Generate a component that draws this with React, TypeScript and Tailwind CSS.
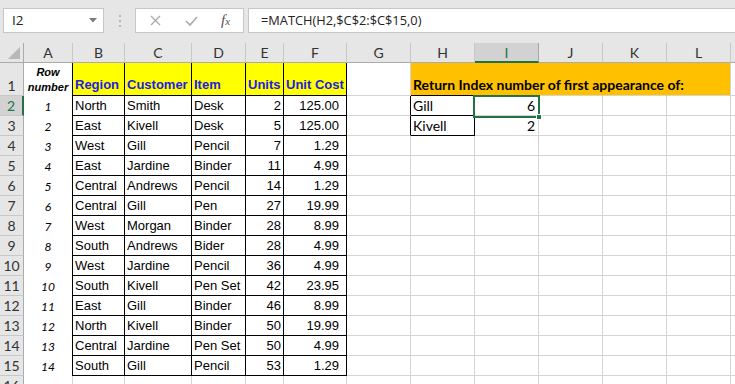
import React from 'react';

// sample data as shown in the sheet
const rows = [
  { idx: 1, region: 'North', customer: 'Smith', item: 'Desk', units: 2, cost: '125.00' },
  { idx: 2, region: 'East', customer: 'Kivell', item: 'Desk', units: 5, cost: '125.00' },
  { idx: 3, region: 'West', customer: 'Gill', item: 'Pencil', units: 7, cost: '1.29' },
  { idx: 4, region: 'East', customer: 'Jardine', item: 'Binder', units: 11, cost: '4.99' },
  { idx: 5, region: 'Central', customer: 'Andrews', item: 'Pencil', units: 14, cost: '1.29' },
  { idx: 6, region: 'Central', customer: 'Gill', item: 'Pen', units: 27, cost: '19.99' },
  { idx: 7, region: 'West', customer: 'Morgan', item: 'Binder', units: 28, cost: '8.99' },
  { idx: 8, region: 'South', customer: 'Andrews', item: 'Bider', units: 28, cost: '4.99' },
  { idx: 9, region: 'West', customer: 'Jardine', item: 'Pencil', units: 36, cost: '4.99' },
  { idx: 10, region: 'South', customer: 'Kivell', item: 'Pen Set', units: 42, cost: '23.95' },
  { idx: 11, region: 'East', customer: 'Gill', item: 'Binder', units: 46, cost: '8.99' },
  { idx: 12, region: 'North', customer: 'Kivell', item: 'Binder', units: 50, cost: '19.99' },
  { idx: 13, region: 'Central', customer: 'Jardine', item: 'Pen Set', units: 50, cost: '4.99' },
  { idx: 14, region: 'South', customer: 'Gill', item: 'Pencil', units: 53, cost: '1.29' },
];

const lookups: Record<number, { name: string; value: number }> = {
  2: { name: 'Gill', value: 6 },
  3: { name: 'Kivell', value: 2 },
};

const colHeads = [
  { label: 'A', w: 'w-[49px]' },
  { label: 'B', w: 'w-[52px]' },
  { label: 'C', w: 'w-[67px]' },
  { label: 'D', w: 'w-[54px]' },
  { label: 'E', w: 'w-[38px]' },
  { label: 'F', w: 'w-[63px]' },
  { label: 'G', w: 'w-[64px]' },
  { label: 'H', w: 'w-[64px]' },
  { label: 'I', w: 'w-[64px]' },
  { label: 'J', w: 'w-[64px]' },
  { label: 'K', w: 'w-[64px]' },
  { label: 'L', w: 'w-[64px]' },
];

const cell = 'shrink-0 h-full border-r border-b flex items-end pb-[1px] whitespace-nowrap';
const arial = "font-['Liberation_Sans',Arial,sans-serif] text-[13px] leading-[16px] text-black";
const calibri = "font-['Lato',sans-serif] text-[14px] leading-[16px] text-black";

function FormulaBar() {
  return (
    <div className="h-[43px] shrink-0 bg-[#e6e6e6] flex items-start pt-[8px] pl-[3px]">
      {/* name box */}
      <div className="w-[101px] h-[25px] bg-white border border-[#c6c6c6] flex items-center justify-between pl-[8px] pr-[6px]">
        <span className="font-['Open_Sans',sans-serif] text-[13.5px] text-[#222]">I2</span>
        <svg width="8" height="5" viewBox="0 0 8 5"><path d="M0 0h8L4 4.5z" fill="#7a7a7a" /></svg>
      </div>
      <div className="w-[31px] h-[25px] flex flex-col items-center justify-center gap-[3px]">
        <span className="w-[2px] h-[2px] bg-[#b9b9b9]" />
        <span className="w-[2px] h-[2px] bg-[#b9b9b9]" />
        <span className="w-[2px] h-[2px] bg-[#b9b9b9]" />
      </div>
      {/* cancel / enter / fx */}
      <div className="w-[109px] h-[25px] bg-white border border-[#c6c6c6] flex items-center">
        <div className="w-[37px] flex justify-center pl-[2px]">
          <svg width="11" height="11" viewBox="0 0 11 11"><path d="M1 1l9 9M10 1l-9 9" stroke="#a9a9a9" strokeWidth="1.3" /></svg>
        </div>
        <div className="w-[37px] flex justify-center">
          <svg width="13" height="10" viewBox="0 0 13 10"><path d="M1 5l4 4 7-8" stroke="#a9a9a9" strokeWidth="1.6" fill="none" /></svg>
        </div>
        <div className="flex-1 flex justify-center pr-[2px]">
          <span className="font-['Liberation_Serif',serif] italic text-[15px] leading-none text-[#555]">f<span className="text-[11px]">x</span></span>
        </div>
      </div>
      <div className="w-[4px]" />
      <div className="flex-1 h-[25px] bg-white border border-r-0 border-[#c6c6c6] flex items-center pl-[12px]">
        <span className="font-['Open_Sans',sans-serif] text-[12.8px] text-[#222] whitespace-nowrap">=MATCH(H2,$C$2:$C$15,0)</span>
      </div>
    </div>
  );
}

function ColumnHeaders() {
  return (
    <div className="flex h-[20px] shrink-0 bg-[#e6e6e6]">
      <div className="w-[24px] shrink-0 h-full border-r border-b border-[#ababab] flex items-end justify-end pr-[3px] pb-[3px]">
        <svg width="12" height="12" viewBox="0 0 12 12"><path d="M12 0v12H0z" fill="#b8b8b8" /></svg>
      </div>
      {colHeads.map((c) =>
        c.label === 'I' ? (
          <div key={c.label} className={`${c.w} shrink-0 h-full bg-[#d2d2d2] border-r border-[#a6a6a6] border-b-2 border-b-[#217346] flex items-center justify-center font-['Lato',sans-serif] text-[14px] text-[#217346]`}>
            {c.label}
          </div>
        ) : (
          <div key={c.label} className={`${c.w} shrink-0 h-full border-r border-r-[#c8c8c8] border-b border-b-[#ababab] flex items-center justify-center font-['Lato',sans-serif] text-[14px] text-[#333]`}>
            {c.label}
          </div>
        )
      )}
      <div className="flex-1 border-b border-[#ababab]" />
    </div>
  );
}

function RowHead({ n, selected }: { n: number; selected?: boolean }) {
  if (selected) {
    return (
      <div className="w-[24px] shrink-0 h-full bg-[#d2d2d2] border-r-2 border-r-[#217346] border-b border-b-[#c8c8c8] flex items-end justify-center pb-[1px] font-['Lato',sans-serif] text-[14px] leading-[16px] text-[#217346]">
        {n}
      </div>
    );
  }
  return (
    <div className="w-[24px] shrink-0 h-full bg-[#e6e6e6] border-r border-r-[#ababab] border-b border-b-[#c8c8c8] flex items-end justify-center pb-[1px] font-['Lato',sans-serif] text-[14px] leading-[16px] text-[#333]">
      {n}
    </div>
  );
}

function HeaderRow() {
  const yellow = `${cell} bg-[#ffff00] border-black items-center pb-0 pl-[2px] font-['Liberation_Sans',Arial,sans-serif] font-bold text-[13px] text-[#2020e6]`;
  return (
    <div className="flex h-[33px] shrink-0">
      <RowHead n={1} />
      <div className="w-[49px] shrink-0 h-full border-r border-black bg-white flex flex-col items-center justify-center pt-[1px] font-['Liberation_Sans',Arial,sans-serif] font-bold italic text-[11px] leading-[15px] text-black">
        <span>Row</span>
        <span>number</span>
      </div>
      <div className={`w-[52px] ${yellow}`}>Region</div>
      <div className={`w-[67px] ${yellow}`}>Customer</div>
      <div className={`w-[54px] ${yellow}`}>Item</div>
      <div className={`w-[38px] ${yellow}`}>Units</div>
      <div className={`w-[63px] ${yellow}`}>Unit Cost</div>
      <div className={`w-[64px] ${cell} border-[#d4d4d4]`} />
      <div className={`w-[64px] ${cell} bg-[#ffc000] border-r-[#ffc000] border-b-black pl-[2px] pb-[2px]`}>
        <span className="relative z-10 font-['Lato',sans-serif] font-bold text-[14px] leading-[16px] text-black">Return Index number of first appearance of:</span>
      </div>
      <div className={`w-[64px] ${cell} bg-[#ffc000] border-r-[#ffc000] border-b-[#d4d4d4]`} />
      <div className={`w-[64px] ${cell} bg-[#ffc000] border-r-[#ffc000] border-b-[#d4d4d4]`} />
      <div className={`w-[64px] ${cell} bg-[#ffc000] border-r-[#ffc000] border-b-[#d4d4d4]`} />
      <div className={`w-[64px] ${cell} bg-[#ffc000] border-r-[#d4d4d4] border-b-[#d4d4d4]`} />
      <div className="flex-1 border-b border-[#d4d4d4]" />
    </div>
  );
}

function DataRow({ n }: { n: number }) {
  const r = rows[n - 2];
  const look = lookups[n];
  const grid = `${cell} border-[#d4d4d4]`;
  const boxed = `${cell} border-black`;
  return (
    <div className="flex h-[20px] shrink-0">
      <RowHead n={n} selected={n === 2} />
      <div className="w-[49px] shrink-0 h-full border-r border-black bg-white flex items-end justify-center pb-[1px] font-['Lato',sans-serif] italic text-[12px] leading-[16px] text-black">
        {r.idx}
      </div>
      <div className={`w-[52px] ${boxed} pl-[2px] ${arial}`}>{r.region}</div>
      <div className={`w-[67px] ${boxed} pl-[2px] ${arial}`}>{r.customer}</div>
      <div className={`w-[54px] ${boxed} pl-[2px] ${arial}`}>{r.item}</div>
      <div className={`w-[38px] ${boxed} justify-end pr-[2px] ${arial}`}>{r.units}</div>
      <div className={`w-[63px] ${boxed} justify-end pr-[7px] ${arial}`}>{r.cost}</div>
      {look ? (
        <>
          <div className={`w-[64px] ${cell} border-r-black border-b-[#d4d4d4]`} />
          <div className={`w-[64px] ${boxed} pl-[2px] ${calibri}`}>{look.name}</div>
          <div className={`w-[64px] ${grid} justify-end pr-[3px] ${calibri}`}>{look.value}</div>
        </>
      ) : (
        <>
          <div className={`w-[64px] ${grid}`} />
          <div className={`w-[64px] ${grid}`} />
          <div className={`w-[64px] ${grid}`} />
        </>
      )}
      <div className={`w-[64px] ${grid}`} />
      <div className={`w-[64px] ${grid}`} />
      <div className={`w-[64px] ${grid}`} />
      <div className="flex-1 border-b border-[#d4d4d4]" />
    </div>
  );
}

function EmptyRow({ n }: { n: number }) {
  const grid = `${cell} border-[#d4d4d4]`;
  return (
    <div className="flex h-[20px] shrink-0">
      <RowHead n={n} />
      {colHeads.map((c) => (
        <div key={c.label} className={`${c.w} ${grid}`} />
      ))}
      <div className="flex-1 border-b border-[#d4d4d4]" />
    </div>
  );
}

export default function App() {
  return (
    <div className="w-[735px] h-[384px] overflow-hidden bg-white flex flex-col">
      <FormulaBar />
      <div className="relative flex flex-col">
        <ColumnHeaders />
        <HeaderRow />
        {rows.map((_, i) => (
          <DataRow key={i} n={i + 2} />
        ))}
        <EmptyRow n={16} />
        {/* active cell I2 */}
        <div className="absolute left-[473px] top-[52px] w-[67px] h-[23px] border-2 border-[#217346] pointer-events-none" />
        <div className="absolute left-[536px] top-[71px] w-[6px] h-[6px] bg-[#217346] border border-white pointer-events-none" />
      </div>
    </div>
  );
}
